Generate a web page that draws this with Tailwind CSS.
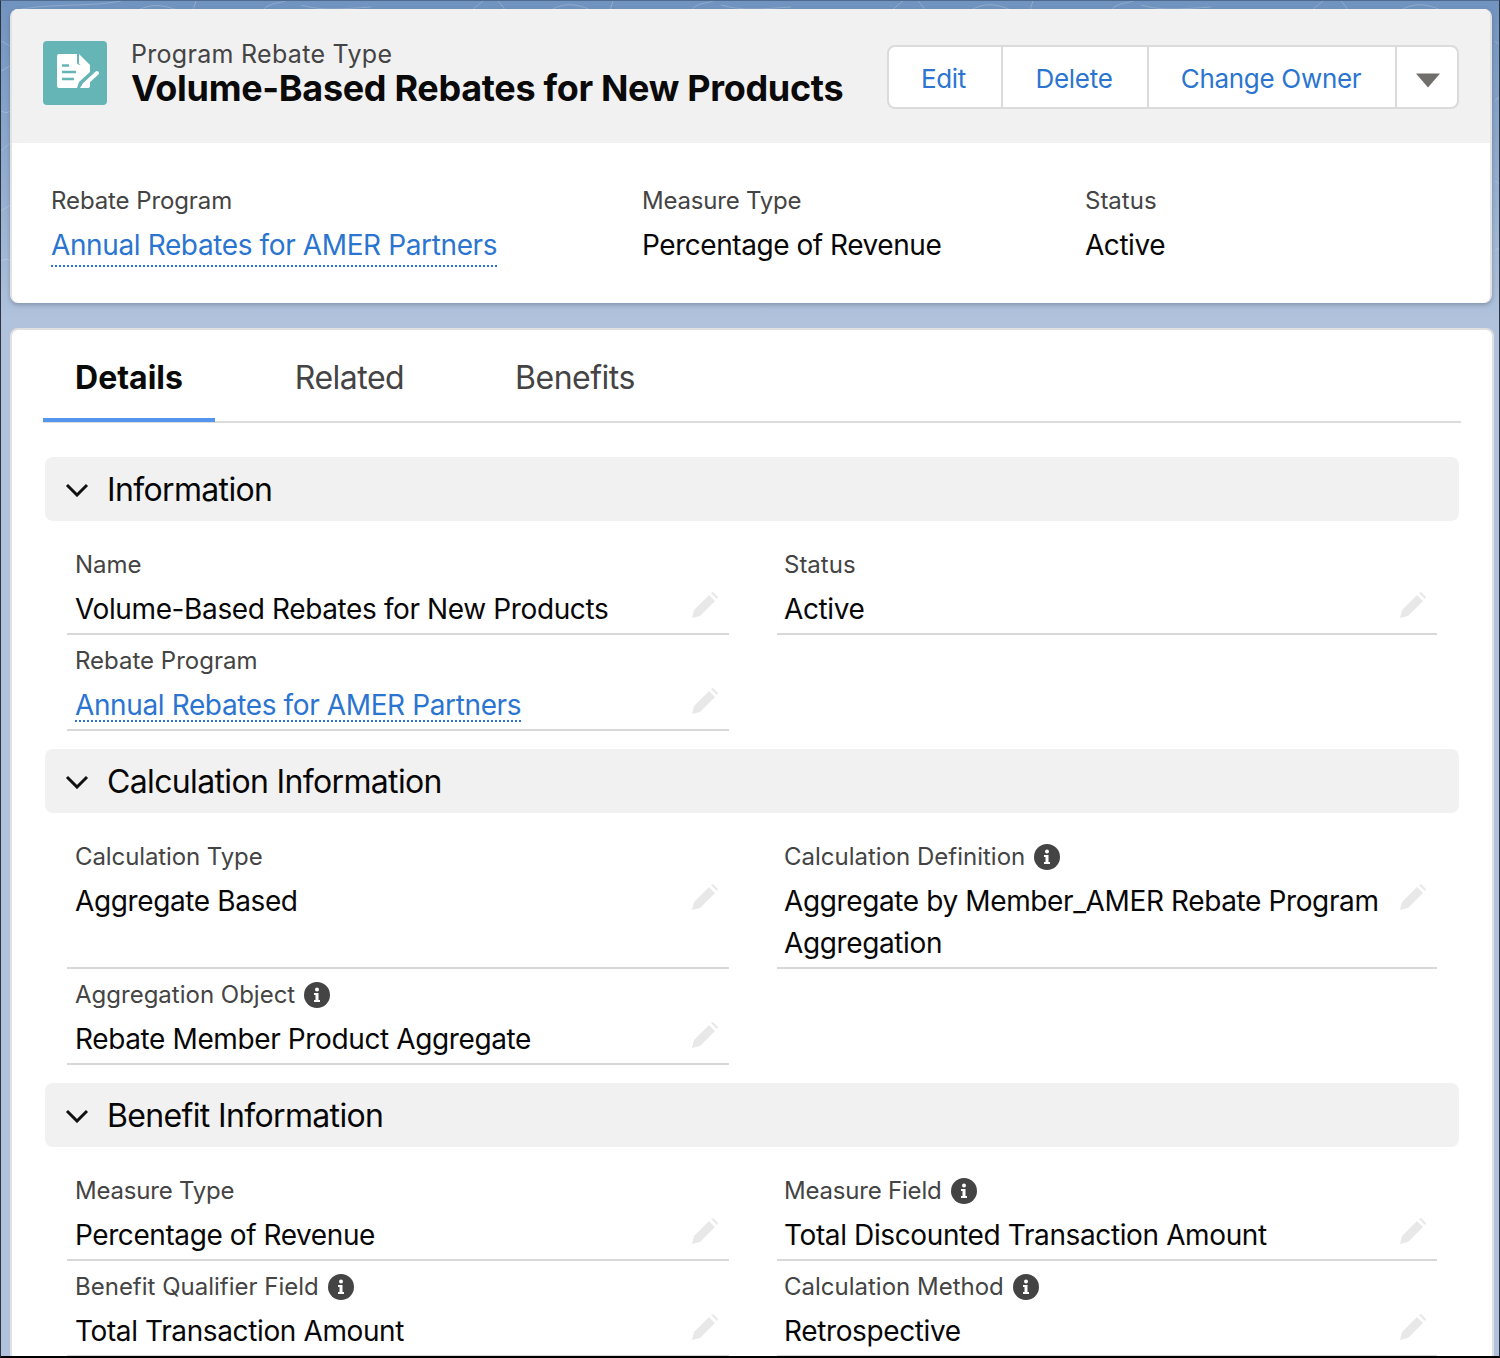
<!DOCTYPE html>
<html lang="en">
  <head>
    <meta charset="UTF-8" />
    <title>Program Rebate Type</title>
    <script src="https://cdn.jsdelivr.net/npm/@tailwindcss/browser@4"></script>
  </head>
  <body class="font-['Inter',sans-serif] text-[#080707]">
    <div class="relative h-[1358px] w-[1500px] overflow-hidden border-x border-t border-b-2 border-x-[#2c3440] border-t-[#4f6a8f] border-b-black bg-gradient-to-b from-[#7093bf] to-[#b0c2dc] to-[320px] pl-[9px] pr-[6px] pt-[8px]">
      <!-- faint background pattern -->
      <svg viewBox="0 0 1500 320" class="absolute left-0 top-0 h-[320px] w-[1500px]" fill="none" stroke="#fff" stroke-opacity="0.22" stroke-width="1">
        <path d="M20 8C60 2 90 6 120 0M135 10c20-10 30-4 45 0M195 0l-3 9M262 9c8-8 14-6 22-9M300 4c20 6 40 4 70 2M470 10l12-10M497 0c4 4 6 8 8 10M550 9c15-8 25-6 40 0M612 0l-3 9M690 9c8-8 14-6 22-9M720 4c20 6 40 4 70 2M890 10l12-10M917 0c4 4 6 8 8 10M970 9c15-8 25-6 40 0M1032 0l-3 9M1110 9c8-8 14-6 22-9M1140 4c20 6 40 4 70 2M1310 10l12-10M1340 0c4 4 6 8 8 10M1400 9c15-8 25-6 40 0" />
        <path d="M0 40c4 2 7 4 9 5M0 70l9-5M0 110c4 2 7 2 9 0M0 150l9-8M0 210l9-6M0 260c4-2 7-2 9 0M1494 40l6 5M1494 100l6-6M1494 180l6 4M1494 250l6-4" />
      </svg>

      <!-- Highlights card -->
      <div class="relative w-[1482px] overflow-hidden rounded-lg border-x-2 border-[#e2e2e2] bg-white shadow-[0_2px_4px_rgba(60,70,90,0.35)]">
        <div class="flex h-[134px] items-center bg-[#f1f1f1] pl-[31px] pr-[31px]">
          <div class="mb-[6px] flex h-16 w-16 shrink-0 items-center justify-center rounded bg-[#65b5b6]">
            <svg viewBox="0 0 64 64" class="h-16 w-16">
              <path d="M14 15a2 2 0 0 1 2-2h18v8a3 3 0 0 0 3 3h10v7L36 41l-2 6H16a2 2 0 0 1-2-2zM39 44l8-7v8a2 2 0 0 1-2 2h-8z" fill="#fff" />
              <path d="M36 13l11 11H38a2 2 0 0 1-2-2z" fill="#fff" />
              <path d="M19 24.500h7M19 31h14M19 38h12" stroke="#65b5b6" stroke-width="2.500" fill="none" />
              <path d="M41 44l13-12" stroke="#fff" stroke-width="4" stroke-linecap="round" fill="none" />
            </svg>
          </div>
          <div class="mb-[4px] ml-6 min-w-0">
            <div class="text-[25px] leading-[28px] tracking-[0.3px] text-[#444]">Program Rebate Type</div>
            <div class="whitespace-nowrap text-[36px] font-bold leading-[40px] tracking-[-0.32px] text-[#0a0a0a]">Volume-Based Rebates for New Products</div>
          </div>
          <div class="ml-auto mt-[2px] flex h-16 overflow-hidden rounded-lg border-2 border-[#dbdbdb] bg-white pt-0 text-[26px] tracking-[-0.3px] text-[#2b75d0]">
            <div class="flex w-[114px] items-center justify-center border-r-2 border-[#dbdbdb] pr-[3px] pt-[2px]">Edit</div>
            <div class="flex w-[146px] items-center justify-center border-r-2 border-[#dbdbdb] pr-[2px] pt-[2px]">Delete</div>
            <div class="flex w-[248px] items-center justify-center border-r-2 border-[#dbdbdb] pr-[2px] pt-[2px]">Change Owner</div>
            <div class="flex w-[60px] items-center justify-center pl-[1px] pt-[6px]">
              <svg viewBox="0 0 24 14" class="h-[15px] w-6"><path d="M0 0h24L12 14z" fill="#706e6b" /></svg>
            </div>
          </div>
        </div>
        <div class="flex h-[160px] pl-[39px] pt-[42px]">
          <div class="w-[591px]">
            <div class="text-[24px] leading-8 tracking-[-0.1px] text-[#444]">Rebate Program</div>
            <div class="mt-[12px] text-[28px] leading-8 tracking-[-0.38px] text-[#2b75d0]"><span class="border-b-2 border-dotted border-[#2b75d0] pb-[3px]">Annual Rebates for AMER Partners</span></div>
          </div>
          <div class="w-[443px]">
            <div class="text-[24px] leading-8 tracking-[-0.2px] text-[#444]">Measure Type</div>
            <div class="mt-[12px] text-[28px] leading-8 tracking-[-0.45px]">Percentage of Revenue</div>
          </div>
          <div>
            <div class="text-[24px] leading-8 text-[#444]">Status</div>
            <div class="mt-[12px] text-[28px] leading-8 tracking-[-0.45px]">Active</div>
          </div>
        </div>
      </div>

      <!-- Details card -->
      <div class="relative mt-[25px] h-[1100px] w-[1484px] rounded-lg border-2 border-[#e0e0e0] bg-white px-[31px]">
        <!-- Tabs -->
        <div class="flex h-[93px] border-b-2 border-[#dcdcdc] text-[32px] tracking-[-0.5px] text-[#444]">
          <div class="flex h-[92px] w-[172px] items-center justify-center border-b-4 border-[#5495ee] pt-[7px] font-bold tracking-normal text-[#0a0a0a]">Details</div>
          <div class="flex h-[92px] w-[269px] items-center justify-center pt-[3px]">Related</div>
          <div class="flex h-[92px] w-[182px] items-center justify-center pt-[3px]">Benefits</div>
        </div>

        <!-- Information -->
        <div class="mx-[2px] mt-[34px] flex h-16 w-[1414px] items-center rounded-lg bg-[#f1f1f1] pl-5 pt-[2px] text-[32px] tracking-[-0.65px]">
          <svg viewBox="0 0 24 14" class="mr-[18px] h-[14px] w-6"><path d="M2 2l10 10L22 2" stroke="#111" stroke-width="3" fill="none" /></svg>Information
        </div>
        <div class="mt-[18px] grid grid-cols-[662px_660px] gap-x-12 pl-6">
          <div class="relative h-[96px] border-b-2 border-[#d8d8d8] pl-2">
            <div class="pt-[10px] text-[24px] leading-8 text-[#444]">Name</div>
            <div class="mt-[12px] text-[28px] leading-8 tracking-[-0.38px]">Volume-Based Rebates for New Products</div>
            <svg viewBox="0 0 28 28" class="absolute right-[10px] top-[52px] h-7 w-7"><path d="M1 27l2-8L18 4l6 6L9 25zM20 2l2-1 5 5-1 2z" fill="#e8e8e8" /></svg>
          </div>
          <div class="relative h-[96px] border-b-2 border-[#d8d8d8] pl-[7px]">
            <div class="pt-[10px] text-[24px] leading-8 text-[#444]">Status</div>
            <div class="mt-[12px] text-[28px] leading-8 tracking-[-0.38px]">Active</div>
            <svg viewBox="0 0 28 28" class="absolute right-[10px] top-[52px] h-7 w-7"><path d="M1 27l2-8L18 4l6 6L9 25zM20 2l2-1 5 5-1 2z" fill="#e8e8e8" /></svg>
          </div>
          <div class="relative h-[96px] border-b-2 border-[#d8d8d8] pl-2">
            <div class="pt-[10px] text-[24px] leading-8 text-[#444]">Rebate Program</div>
            <div class="mt-[12px] text-[28px] leading-8 tracking-[-0.38px] text-[#2b75d0]"><span class="inline-block h-[33px] border-b-2 border-dotted border-[#2b75d0]">Annual Rebates for AMER Partners</span></div>
            <svg viewBox="0 0 28 28" class="absolute right-[10px] top-[52px] h-7 w-7"><path d="M1 27l2-8L18 4l6 6L9 25zM20 2l2-1 5 5-1 2z" fill="#e8e8e8" /></svg>
          </div>
          <div></div>
        </div>

        <!-- Calculation Information -->
        <div class="mx-[2px] mt-[18px] flex h-16 w-[1414px] items-center rounded-lg bg-[#f1f1f1] pl-5 pt-[2px] text-[32px] tracking-[-0.65px]">
          <svg viewBox="0 0 24 14" class="mr-[18px] h-[14px] w-6"><path d="M2 2l10 10L22 2" stroke="#111" stroke-width="3" fill="none" /></svg>Calculation Information
        </div>
        <div class="mt-[18px] grid grid-cols-[662px_660px] gap-x-12 pl-6">
          <div class="relative h-[138px] border-b-2 border-[#d8d8d8] pl-2">
            <div class="pt-[10px] text-[24px] leading-8 tracking-[-0.1px] text-[#444]">Calculation Type</div>
            <div class="mt-[12px] text-[28px] leading-8 tracking-[-0.38px]">Aggregate Based</div>
            <svg viewBox="0 0 28 28" class="absolute right-[10px] top-[52px] h-7 w-7"><path d="M1 27l2-8L18 4l6 6L9 25zM20 2l2-1 5 5-1 2z" fill="#e8e8e8" /></svg>
          </div>
          <div class="relative h-[138px] border-b-2 border-[#d8d8d8] pl-[7px]">
            <div class="flex items-center pt-[10px] text-[24px] leading-8 text-[#444]">Calculation Definition
              <svg viewBox="0 0 26 26" class="ml-[9px] h-[26px] w-[26px]"><circle cx="13" cy="13" r="13" fill="#444" /><circle cx="13" cy="7.500" r="2" fill="#fff" /><path d="M10 11h4.500v7H16v2h-6v-2h1.500v-5H10z" fill="#fff" /></svg>
            </div>
            <div class="mt-[12px] w-[610px] -translate-y-[5px] text-[28px] leading-[42px] tracking-[-0.38px]">Aggregate by Member_AMER Rebate Program Aggregation</div>
            <svg viewBox="0 0 28 28" class="absolute right-[10px] top-[52px] h-7 w-7"><path d="M1 27l2-8L18 4l6 6L9 25zM20 2l2-1 5 5-1 2z" fill="#e8e8e8" /></svg>
          </div>
          <div class="relative h-[96px] border-b-2 border-[#d8d8d8] pl-2">
            <div class="flex items-center pt-[10px] text-[24px] leading-8 text-[#444]">Aggregation Object
              <svg viewBox="0 0 26 26" class="ml-[9px] h-[26px] w-[26px]"><circle cx="13" cy="13" r="13" fill="#444" /><circle cx="13" cy="7.500" r="2" fill="#fff" /><path d="M10 11h4.500v7H16v2h-6v-2h1.500v-5H10z" fill="#fff" /></svg>
            </div>
            <div class="mt-[12px] text-[28px] leading-8 tracking-[-0.38px]">Rebate Member Product Aggregate</div>
            <svg viewBox="0 0 28 28" class="absolute right-[10px] top-[52px] h-7 w-7"><path d="M1 27l2-8L18 4l6 6L9 25zM20 2l2-1 5 5-1 2z" fill="#e8e8e8" /></svg>
          </div>
          <div></div>
        </div>

        <!-- Benefit Information -->
        <div class="mx-[2px] mt-[18px] flex h-16 w-[1414px] items-center rounded-lg bg-[#f1f1f1] pl-5 pt-[2px] text-[32px] tracking-[-0.65px]">
          <svg viewBox="0 0 24 14" class="mr-[18px] h-[14px] w-6"><path d="M2 2l10 10L22 2" stroke="#111" stroke-width="3" fill="none" /></svg>Benefit Information
        </div>
        <div class="mt-[18px] grid grid-cols-[662px_660px] gap-x-12 pl-6">
          <div class="relative h-[96px] border-b-2 border-[#d8d8d8] pl-2">
            <div class="pt-[10px] text-[24px] leading-8 tracking-[-0.2px] text-[#444]">Measure Type</div>
            <div class="mt-[12px] text-[28px] leading-8 tracking-[-0.42px]">Percentage of Revenue</div>
            <svg viewBox="0 0 28 28" class="absolute right-[10px] top-[52px] h-7 w-7"><path d="M1 27l2-8L18 4l6 6L9 25zM20 2l2-1 5 5-1 2z" fill="#e8e8e8" /></svg>
          </div>
          <div class="relative h-[96px] border-b-2 border-[#d8d8d8] pl-[7px]">
            <div class="flex items-center pt-[10px] text-[24px] leading-8 tracking-[-0.2px] text-[#444]">Measure Field
              <svg viewBox="0 0 26 26" class="ml-[9px] h-[26px] w-[26px]"><circle cx="13" cy="13" r="13" fill="#444" /><circle cx="13" cy="7.500" r="2" fill="#fff" /><path d="M10 11h4.500v7H16v2h-6v-2h1.500v-5H10z" fill="#fff" /></svg>
            </div>
            <div class="mt-[12px] text-[28px] leading-8 tracking-[-0.38px]">Total Discounted Transaction Amount</div>
            <svg viewBox="0 0 28 28" class="absolute right-[10px] top-[52px] h-7 w-7"><path d="M1 27l2-8L18 4l6 6L9 25zM20 2l2-1 5 5-1 2z" fill="#e8e8e8" /></svg>
          </div>
          <div class="relative h-[96px] border-b-2 border-[#d8d8d8] pl-2">
            <div class="flex items-center pt-[10px] text-[24px] leading-8 text-[#444]">Benefit Qualifier Field
              <svg viewBox="0 0 26 26" class="ml-[9px] h-[26px] w-[26px]"><circle cx="13" cy="13" r="13" fill="#444" /><circle cx="13" cy="7.500" r="2" fill="#fff" /><path d="M10 11h4.500v7H16v2h-6v-2h1.500v-5H10z" fill="#fff" /></svg>
            </div>
            <div class="mt-[12px] text-[28px] leading-8 tracking-[-0.38px]">Total Transaction Amount</div>
            <svg viewBox="0 0 28 28" class="absolute right-[10px] top-[52px] h-7 w-7"><path d="M1 27l2-8L18 4l6 6L9 25zM20 2l2-1 5 5-1 2z" fill="#e8e8e8" /></svg>
          </div>
          <div class="relative h-[96px] border-b-2 border-[#d8d8d8] pl-[7px]">
            <div class="flex items-center pt-[10px] text-[24px] leading-8 text-[#444]">Calculation Method
              <svg viewBox="0 0 26 26" class="ml-[9px] h-[26px] w-[26px]"><circle cx="13" cy="13" r="13" fill="#444" /><circle cx="13" cy="7.500" r="2" fill="#fff" /><path d="M10 11h4.500v7H16v2h-6v-2h1.500v-5H10z" fill="#fff" /></svg>
            </div>
            <div class="mt-[12px] text-[28px] leading-8 tracking-[-0.38px]">Retrospective</div>
            <svg viewBox="0 0 28 28" class="absolute right-[10px] top-[52px] h-7 w-7"><path d="M1 27l2-8L18 4l6 6L9 25zM20 2l2-1 5 5-1 2z" fill="#e8e8e8" /></svg>
          </div>
        </div>
      </div>
    </div>
  </body>
</html>
